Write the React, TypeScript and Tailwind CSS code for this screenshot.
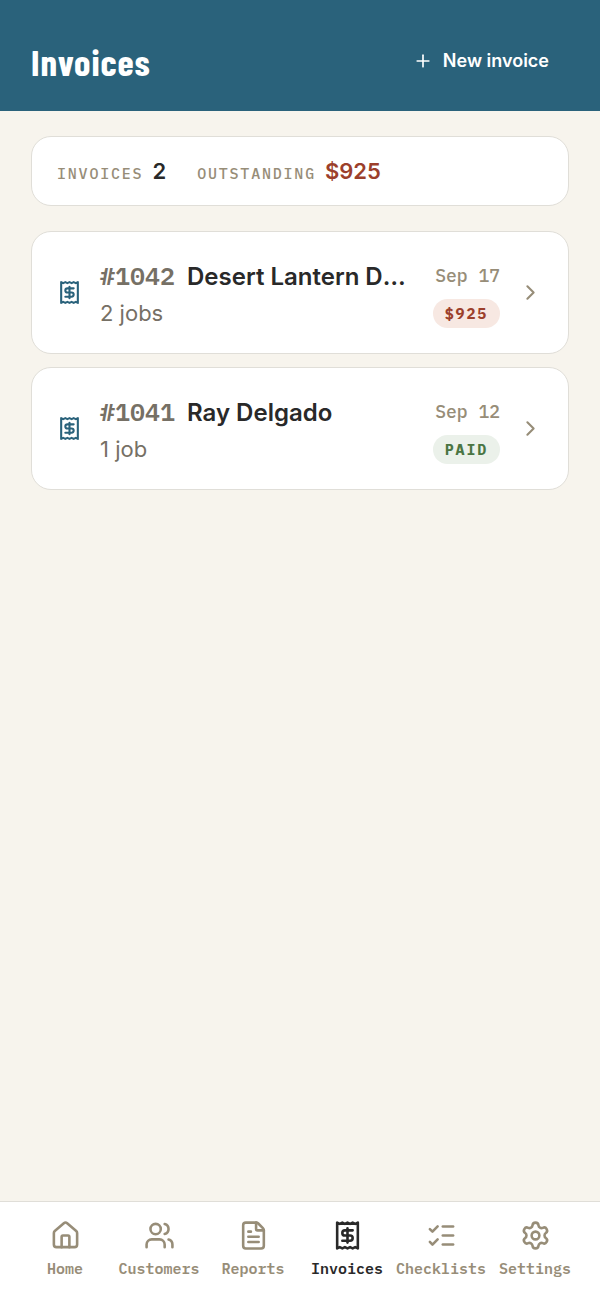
import {
  ChevronRight,
  FileText,
  House,
  ListChecks,
  Plus,
  Receipt,
  Settings,
  Users,
  type LucideIcon,
} from "lucide-react";

type InvoiceStatus = "due" | "paid";

interface Invoice {
  number: number;
  customer: string;
  jobs: number;
  date: string;
  amount: string;
  status: InvoiceStatus;
}

interface Tab {
  label: string;
  icon: LucideIcon;
}

const MONO = "font-['IBM_Plex_Mono','Liberation_Mono',monospace]";

const INVOICES: Invoice[] = [
  {
    number: 1042,
    customer: "Desert Lantern Depot",
    jobs: 2,
    date: "Sep 17",
    amount: "$925",
    status: "due",
  },
  {
    number: 1041,
    customer: "Ray Delgado",
    jobs: 1,
    date: "Sep 12",
    amount: "$480",
    status: "paid",
  },
];

const TABS: Tab[] = [
  { label: "Home", icon: House },
  { label: "Customers", icon: Users },
  { label: "Reports", icon: FileText },
  { label: "Invoices", icon: Receipt },
  { label: "Checklists", icon: ListChecks },
  { label: "Settings", icon: Settings },
];

const BADGE_CLASS: Record<InvoiceStatus, string> = {
  due: "bg-[#f7e8e2] text-[#9c3f2b]",
  paid: "bg-[#ebf1ea] text-[#4a7543]",
};

function Header() {
  return (
    <header className="flex items-center justify-between bg-[#2a627b] px-[31px] pt-9 pb-[25px] text-white">
      <h1 className="font-['Barlow_Condensed','Liberation_Sans_Narrow',sans-serif] text-[37px] leading-[50px] font-bold tracking-wide">
        Invoices
      </h1>
      <button
        type="button"
        className="flex items-center gap-2.5 px-5 text-[18px] leading-7 font-semibold"
      >
        <Plus className="size-5" strokeWidth={2} />
        New invoice
      </button>
    </header>
  );
}

function Summary() {
  return (
    <dl className="flex items-baseline gap-[31px] rounded-[20px] border border-[#e0ded8] bg-white px-[25px] py-[18px]">
      <div className="flex items-baseline gap-[9px]">
        <dt
          className={`${MONO} text-[15px] font-medium tracking-[0.12em] text-[#978d78]`}
        >
          INVOICES
        </dt>
        <dd className="text-[22px] leading-8 font-semibold text-[#292929]">2</dd>
      </div>
      <div className="flex items-baseline gap-[9px]">
        <dt
          className={`${MONO} text-[15px] font-medium tracking-[0.12em] text-[#978d78]`}
        >
          OUTSTANDING
        </dt>
        <dd className="text-[22px] leading-8 font-semibold text-[#9c3f2b]">
          $925
        </dd>
      </div>
    </dl>
  );
}

function InvoiceRow({ invoice }: { invoice: Invoice }) {
  return (
    <li>
      <a
        href={`#invoice-${invoice.number}`}
        className="flex items-center rounded-[20px] border border-[#e0ded8] bg-white px-[25px] py-6"
      >
        <Receipt className="size-[25px] shrink-0 text-[#2a627b]" />
        <div className="ml-[18px] min-w-0 flex-1">
          <div className="flex items-baseline gap-3">
            <span
              className={`${MONO} text-[25px] leading-10 font-semibold text-[#767065]`}
            >
              #{invoice.number}
            </span>
            <span className="truncate text-[24px] leading-10 font-semibold text-[#292929]">
              {invoice.customer}
            </span>
          </div>
          <p className="text-[22px] leading-8 text-[#767065]">
            {invoice.jobs} {invoice.jobs === 1 ? "job" : "jobs"}
          </p>
        </div>
        <div className="ml-[18px] flex shrink-0 flex-col items-end justify-end gap-[9px] self-stretch pb-px">
          <time
            className={`${MONO} text-[18px] leading-7 font-medium text-[#978d78]`}
          >
            {invoice.date}
          </time>
          <span
            className={`${MONO} ${BADGE_CLASS[invoice.status]} rounded-full px-3 text-[15px] leading-[29px] font-bold tracking-[0.12em]`}
          >
            {invoice.status === "paid" ? "PAID" : invoice.amount}
          </span>
        </div>
        <ChevronRight className="ml-[18px] size-[25px] shrink-0 text-[#978d78]" />
      </a>
    </li>
  );
}

function TabBar({ active }: { active: string }) {
  return (
    <nav className="grid grid-cols-6 border-t border-[#e0ded8] bg-white px-[18px] pt-[18px] pb-5">
      {TABS.map(({ label, icon: Icon }) => (
        <a
          key={label}
          href={`#${label.toLowerCase()}`}
          aria-current={label === active ? "page" : undefined}
          className={`flex flex-col items-center gap-2 ${
            label === active ? "text-[#292929]" : "text-[#978d78]"
          }`}
        >
          <Icon className="size-[31px]" />
          <span
            className={`${MONO} text-[15px] leading-5 font-semibold whitespace-nowrap`}
          >
            {label}
          </span>
        </a>
      ))}
    </nav>
  );
}

export default function App() {
  return (
    <div className="flex min-h-screen flex-col bg-[#f7f4ed] font-['Inter',sans-serif]">
      <Header />
      <main className="flex-1 px-[31px] pt-[25px]">
        <Summary />
        <ul className="mt-[25px] flex flex-col gap-[13px]">
          {INVOICES.map((invoice) => (
            <InvoiceRow key={invoice.number} invoice={invoice} />
          ))}
        </ul>
      </main>
      <TabBar active="Invoices" />
    </div>
  );
}
